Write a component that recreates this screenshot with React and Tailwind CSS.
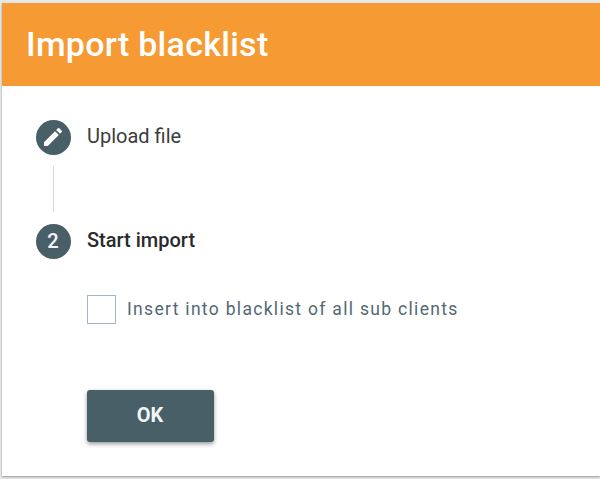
function Step({ children, label, active }) {
  return (
    <div className="flex h-[35px] items-center">
      <div className="flex size-[35px] shrink-0 items-center justify-center rounded-full bg-[#495f68] text-[20px] font-medium text-[#f4f7f9]">
        <div className="pr-px pb-[2px]">{children}</div>
      </div>
      <span className={active ? "ml-4 pb-[3px] text-[20px] font-medium text-[#2a2a2e]" : "ml-4 pb-[3px] text-[20px] text-[#3c3c3c]"}>
        {label}
      </span>
    </div>
  );
}

export default function App() {
  return (
    <div className="h-[479px] w-[600px] overflow-hidden bg-[#e8e8e8] pt-[3px] pl-[2px] font-['Roboto',sans-serif]">
      <div className="h-[473px] bg-white shadow-[0_1px_2px_#999]">
        <header className="flex h-[83px] items-center bg-[#f69a33] pb-[2px] pl-6">
          <h1 className="text-[34px] font-medium leading-[40px] tracking-[0.28px] text-white">Import blacklist</h1>
        </header>
        <main className="pl-[34px] pt-[34px]">
          <Step label="Upload file">
            <svg viewBox="0 0 24 24" className="size-[24px] fill-white">
              <path d="M3 17.25V21h3.75L17.81 9.94l-3.75-3.75L3 17.25zM20.71 7.04a1 1 0 0 0 0-1.41l-2.34-2.34a1 1 0 0 0-1.41 0l-1.83 1.83 3.75 3.75 1.83-1.83z" />
            </svg>
          </Step>
          <div className="mt-[11px] mb-[12px] ml-[17px] h-[46px] w-px bg-[#d8d8d8]" />
          <Step label="Start import" active>2</Step>
          <label className="mt-[36px] ml-[51px] flex h-[29px] items-center">
            <span className="size-[29px] border border-[#a3b7c2] bg-white" />
            <span className="ml-[11px] text-[17.5px] tracking-[1.31px] text-[#536873]">Insert into blacklist of all sub clients</span>
          </label>
          <button className="mt-[66px] ml-[51px] h-[52px] w-[127px] rounded-[3px] bg-[#495f68] pr-px pb-[2px] text-[20px] font-bold text-[#f4f7f9] shadow-[0_2px_4px_rgba(0,0,0,.4)]">
            OK
          </button>
        </main>
      </div>
    </div>
  );
}
